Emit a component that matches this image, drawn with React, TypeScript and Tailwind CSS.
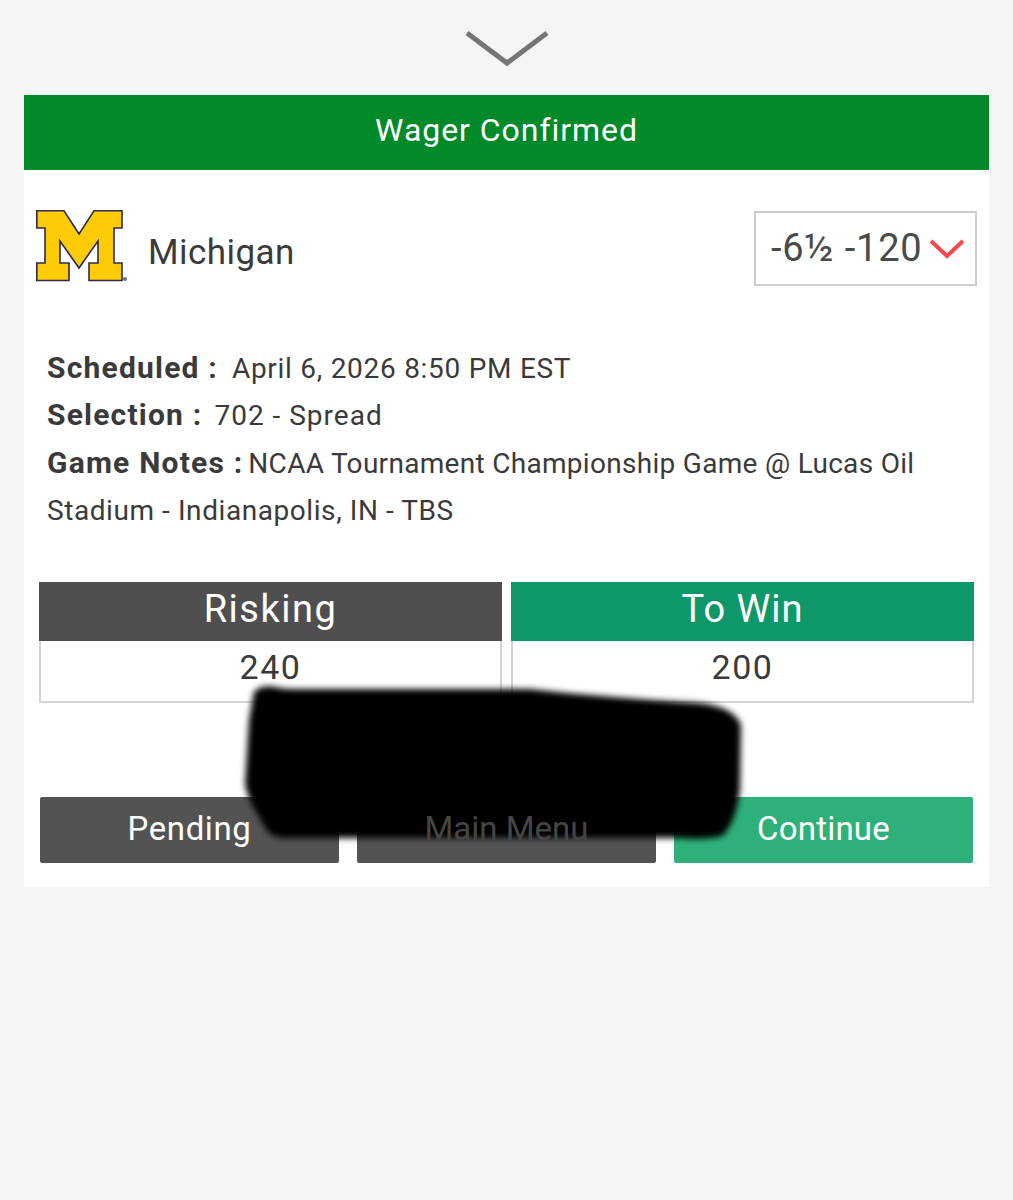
const App = () => {
  return (
    <div className="relative h-[1200px] bg-[#f5f5f5] font-['Roboto',sans-serif] text-[#3a3a3a] overflow-hidden">
      <div className="h-[95px] flex justify-center pt-[30px]">
        <svg width="84" height="38" viewBox="0 0 84 38" fill="none">
          <path d="M2 3 L42 33 L82 3" stroke="#757575" strokeWidth="5" />
        </svg>
      </div>

      <div className="mx-[24px] w-[965px] h-[792px] bg-white">
        <div className="h-[75px] pb-[5px] bg-[#008a2a] text-white flex items-center justify-center text-[32px] tracking-[0.95px]">
          Wager Confirmed
        </div>

        <div className="flex items-start justify-between pl-[12px] pr-[12px] pt-[40px]">
          <div className="flex items-center h-[72px]">
            <svg width="92" height="72" viewBox="0 0 92 72">
              <path
                d="M0.8 0.8 H28 L43 24 L58 0.8 H86 V18 H78 V53 H86 V70.5 H53 V53 H62 V31 L43 58 L24 31 V53 H33 V70.5 H0.8 V53 H9 V18 H0.8 Z"
                fill="#ffcb05"
                stroke="#2b2b4f"
                strokeWidth="1.6"
              />
              <circle cx="89" cy="69" r="2" fill="#5f7186" />
            </svg>
            <span className="ml-[20px] mt-[14px] text-[35px] tracking-[0.45px]">Michigan</span>
          </div>
          <div className="mt-[1px] w-[223px] h-[75px] border-2 border-[#cccccc] flex items-center pl-[15px] text-[#4a4a4a] text-[38px]">
            <span className="tracking-[0.75px]">-6½ -120</span>
            <svg className="ml-[7px]" width="36" height="22" viewBox="0 0 36 22" fill="none">
              <path d="M2 3 L18 18 L34 3" stroke="#f4484f" strokeWidth="4" />
            </svg>
          </div>
        </div>

        <div className="mt-[59px] pl-[23px] pr-[60px] text-[28px] leading-[47.33px]">
          <div className="tracking-[0.72px]">
            <span className="font-bold text-[30px] leading-none tracking-[1.2px] mr-[14px]">Scheduled :</span>April 6, 2026 8:50 PM EST
          </div>
          <div className="tracking-[1px]">
            <span className="font-bold text-[30px] leading-none tracking-[1.2px] mr-[12px]">Selection :</span>702 - Spread
          </div>
          <div className="tracking-[0.3px]">
            <span className="font-bold text-[30px] leading-none tracking-[1.2px] mr-[5px]">Game Notes :</span>NCAA Tournament Championship Game @ Lucas Oil
          </div>
          <div className="tracking-[0.57px]">Stadium - Indianapolis, IN - TBS</div>
        </div>

        <div className="mt-[48px] mx-[15px] grid grid-cols-2 gap-[9px]">
          <div>
            <div className="h-[59px] pb-[4px] bg-[#4f4f4f] text-white text-[38px] tracking-[1.5px] flex items-center justify-center">Risking</div>
            <div className="h-[62px] pb-[8px] border-2 border-t-0 border-[#d4d4d4] bg-white text-[34px] tracking-[1.5px] flex items-center justify-center">240</div>
          </div>
          <div>
            <div className="h-[59px] pb-[4px] bg-[#0e9768] text-white text-[38px] tracking-[1px] flex items-center justify-center">To Win</div>
            <div className="h-[62px] pb-[8px] border-2 border-t-0 border-[#d4d4d4] bg-white text-[34px] tracking-[1.5px] flex items-center justify-center">200</div>
          </div>
        </div>

        <div className="mt-[94px] mx-[16px] grid grid-cols-3 gap-[18px]">
          <button className="h-[66px] pb-[3px] rounded-[2px] bg-[#535353] text-white text-[33px] tracking-[0.6px]">Pending</button>
          <button className="h-[66px] pb-[3px] rounded-[2px] bg-[#535353] text-[33px]">
            <span className="relative z-20 text-[#454545]">Main Menu</span>
          </button>
          <button className="h-[66px] pb-[3px] rounded-[2px] bg-[#2eb07a] text-white text-[33px] tracking-[0.2px]">Continue</button>
        </div>
      </div>

      {/* redaction scribble */}
      <svg className="absolute left-0 top-0 z-10 pointer-events-none" width="1013" height="900" viewBox="0 0 1013 900">
        <defs>
          <filter id="soft">
            <feGaussianBlur stdDeviation="3.2" />
          </filter>
        </defs>
        <path
          d="M254 692 Q262 683 280 688 L288 689 H530 Q600 697 700 703 Q734 707 741 725 L740 790 Q735 825 722 836 Q705 840 680 838 H285 Q268 838 262 822 Q248 800 245 785 L249 720 Z"
          fill="#000"
          filter="url(#soft)"
        />
      </svg>
    </div>
  )
}

export default App
